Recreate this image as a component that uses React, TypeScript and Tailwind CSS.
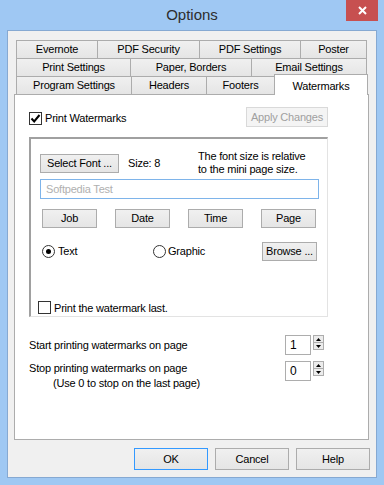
import React from 'react';

const btn =
  'flex items-center justify-center border border-[#acacac] bg-gradient-to-b from-[#f0f0f0] to-[#e5e5e5] text-[11px] tracking-[-0.2px] text-black';

function CheckBox({ checked }: { checked?: boolean }) {
  return (
    <span className="flex h-[13px] w-[13px] shrink-0 items-center justify-center border border-[#333] bg-white">
      {checked && (
        <svg width="11" height="11" viewBox="0 0 11 11">
          <path d="M1.5 5.5 L4.2 8.5 L9.5 2" fill="none" stroke="#000" strokeWidth="2" />
        </svg>
      )}
    </span>
  );
}

function Radio({ on }: { on?: boolean }) {
  return (
    <span className="flex h-[13px] w-[13px] shrink-0 items-center justify-center rounded-full border border-[#333] bg-white">
      {on && <span className="h-[5px] w-[5px] rounded-full bg-black" />}
    </span>
  );
}

function Spinner() {
  return (
    <div className="ml-[2px] flex w-[11px] flex-col self-start">
      <div className="flex h-[8px] items-center justify-center border border-[#adadad] bg-[#ececec]">
        <svg width="5" height="3" viewBox="0 0 5 3">
          <path d="M0 3 L2.5 0 L5 3 Z" fill="#000" />
        </svg>
      </div>
      <div className="-mt-px flex h-[8px] items-center justify-center border border-[#adadad] bg-[#ececec]">
        <svg width="5" height="3" viewBox="0 0 5 3">
          <path d="M0 0 L2.5 3 L5 0 Z" fill="#000" />
        </svg>
      </div>
    </div>
  );
}

function Tab({ label, w, last }: { label: string; w: number; last?: boolean }) {
  return (
    <div
      className={`flex h-[18px] items-center justify-center border-t border-l border-[#acacac] bg-gradient-to-b from-[#f0f0f0] to-[#e5e5e5] text-[11px] tracking-[-0.2px] ${last ? 'border-r' : ''}`}
      style={{ width: w }}
    >
      {label}
    </div>
  );
}

export default function App() {
  return (
    <div className="flex h-[485px] w-[384px] flex-col bg-[#9fc8f3] font-['Liberation_Sans',Arial,sans-serif] text-black">
      {/* title bar */}
      <div className="relative flex h-[30px] items-center justify-center">
        <span className="text-[15px] text-[#2d2d2d]">Options</span>
        <div className="absolute right-[6px] top-0 flex h-[21px] w-[32px] items-center justify-center bg-[#c75050]">
          <svg width="9" height="9" viewBox="0 0 9 9">
            <path d="M1 1 L8 8 M8 1 L1 8" stroke="#fff" strokeWidth="2" />
          </svg>
        </div>
      </div>

      {/* client */}
      <div className="mx-[7px] mb-[7px] flex flex-1 flex-col border border-[#86a9d2] bg-[#f0f0f0] pt-[9px]">
        {/* tabs */}
        <div className="ml-[8px] flex flex-col">
          <div className="flex">
            <Tab label="Evernote" w={81} />
            <Tab label="PDF Security" w={102} />
            <Tab label="PDF Settings" w={101} />
            <Tab label="Poster" w={67} last />
          </div>
          <div className="flex">
            <Tab label="Print Settings" w={114} />
            <Tab label="Paper, Borders" w={121} />
            <Tab label="Email Settings" w={116} last />
          </div>
          <div className="flex h-[18px] items-end">
            <Tab label="Program Settings" w={115} />
            <Tab label="Headers" w={75} />
            <Tab label="Footers" w={68} />
            <div className="relative z-10 -mb-px flex h-[21px] w-[94px] items-start justify-center border-x border-t border-[#acacac] bg-white pt-[3px] text-[11px] tracking-[-0.2px]">
              Watermarks
            </div>
          </div>
        </div>

        {/* panel */}
        <div className="ml-[6px] flex h-[346px] w-[355px] flex-col border border-[#acacac] bg-white pt-[12px]">
          <div className="ml-[14px] flex w-[299px] flex-col">
            <div className="flex items-center justify-between">
              <div className="mt-[3px] flex items-center gap-[3px] text-[11px] tracking-[-0.2px]">
                <CheckBox checked />
                <span>Print Watermarks</span>
              </div>
              <div className="flex h-[20px] w-[82px] items-center justify-center border border-[#d9d9d9] bg-[#f4f4f4] text-[11px] tracking-[-0.2px] text-[#a0a0a0]">
                Apply Changes
              </div>
            </div>

            {/* group */}
            <div className="mt-[10px] flex h-[180px] flex-col border-t-2 border-l-2 border-r border-b border-t-[#a0a0a0] border-l-[#a0a0a0] border-r-[#e3e3e3] border-b-[#e3e3e3] bg-white pt-[11px]">
              <div className="flex items-start text-[11px] tracking-[-0.2px]">
                <div className={`${btn} ml-[9px] mt-[4px] h-[19px] w-[79px]`}>Select Font ...</div>
                <span className="ml-[9px] mt-[4px] w-[70px] leading-[19px]">Size: 8</span>
                <div className="leading-[13px]">
                  <div>The font size is relative</div>
                  <div>to the mini page size.</div>
                </div>
              </div>
              <div className="ml-[9px] mt-[3px] flex h-[21px] w-[279px] items-center border border-[#7eb4ea] bg-white pl-[5px] text-[11px] tracking-[-0.2px] text-[#b0b0b0]">
                Softpedia Test
              </div>
              <div className="ml-[11px] mt-[10px] flex gap-[18px]">
                <div className={`${btn} h-[19px] w-[55px]`}>Job</div>
                <div className={`${btn} h-[19px] w-[55px]`}>Date</div>
                <div className={`${btn} h-[19px] w-[55px]`}>Time</div>
                <div className={`${btn} h-[19px] w-[55px]`}>Page</div>
              </div>
              <div className="ml-[11px] mt-[14px] flex items-center text-[11px] tracking-[-0.2px]">
                <div className="flex w-[111px] items-center gap-[3px]">
                  <Radio on />
                  <span>Text</span>
                </div>
                <div className="flex w-[109px] items-center gap-[2px]">
                  <Radio />
                  <span>Graphic</span>
                </div>
                <div className={`${btn} h-[19px] w-[55px]`}>Browse ...</div>
              </div>
              <div className="ml-[7px] mt-[39px] flex items-center gap-[3px] text-[11px] tracking-[-0.2px]">
                <CheckBox />
                <span>Print the watermark last.</span>
              </div>
            </div>

            {/* page range */}
            <div className="mt-[18px] flex items-center text-[11px] tracking-[-0.2px]">
              <span className="w-[256px]">Start printing watermarks on page</span>
              <div className="flex h-[20px] w-[26px] items-center border border-[#adadad] bg-white pl-[4px] text-[12px]">1</div>
              <Spinner />
            </div>
            <div className="mt-[6px] flex items-start text-[11px] tracking-[-0.2px]">
              <div className="w-[256px] leading-[15px]">
                <div>Stop printing watermarks on page</div>
                <div className="pl-[24px]">(Use 0 to stop on the last page)</div>
              </div>
              <div className="flex h-[20px] w-[26px] items-center border border-[#adadad] bg-white pl-[4px] text-[12px]">0</div>
              <Spinner />
            </div>
          </div>
        </div>

        {/* dialog buttons */}
        <div className="mt-[8px] flex justify-end gap-[7px] pr-[6px]">
          <div className={`${btn} h-[22px] w-[74px] !border-[#3399ff]`}>OK</div>
          <div className={`${btn} h-[22px] w-[74px]`}>Cancel</div>
          <div className={`${btn} h-[22px] w-[74px]`}>Help</div>
        </div>
      </div>
    </div>
  );
}
